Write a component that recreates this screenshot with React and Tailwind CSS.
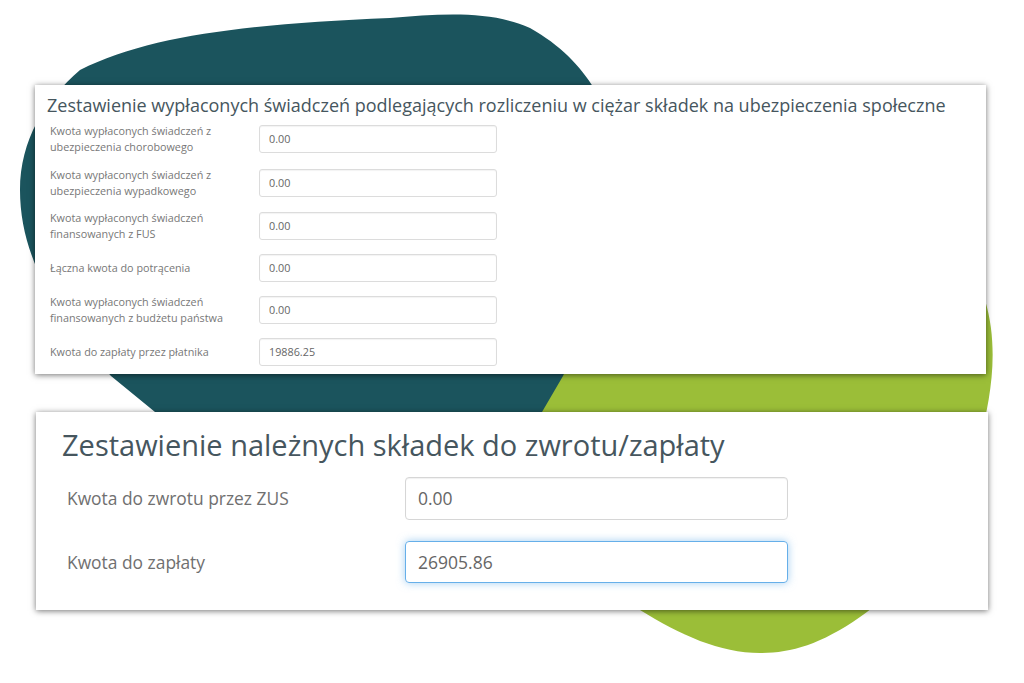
import React from 'react';

const font = { fontFamily: '"Open Sans", "Noto Sans", sans-serif' };

const benefitRows = [
  { label: ['Kwota wypłaconych świadczeń z', 'ubezpieczenia chorobowego'], value: '0.00', h: 'h-[44px]' },
  { label: ['Kwota wypłaconych świadczeń z', 'ubezpieczenia wypadkowego'], value: '0.00', h: 'h-[44px]' },
  { label: ['Kwota wypłaconych świadczeń', 'finansowanych z FUS'], value: '0.00', h: 'h-[42px]' },
  { label: ['Łączna kwota do potrącenia'], value: '0.00', h: 'h-[42px]' },
  { label: ['Kwota wypłaconych świadczeń', 'finansowanych z budżetu państwa'], value: '0.00', h: 'h-[42px]' },
  { label: ['Kwota do zapłaty przez płatnika'], value: '19886.25', h: 'h-[42px]' },
];

function Blobs() {
  return (
    <svg className="absolute inset-0" width="1024" height="683" viewBox="0 0 1024 683">
      <path
        d="M700 260 C800 230 960 240 985 300 C1000 350 990 400 980 440 C960 520 900 590 860 617 C820 645 790 653 760 653 C720 653 680 635 640 610 C600 580 560 500 530 420 C500 340 600 280 700 260 Z"
        fill="#9bbe38"
      />
      <path
        d="M80 70 C150 35 250 24 390 18 C440 14 490 10 530 28 C560 45 580 65 595 90 C640 170 600 300 563 376 L542 412 C520 470 480 520 350 540 C250 550 180 450 155 412 L111 376 C60 320 20 260 20 190 C20 140 45 100 80 70 Z"
        fill="#1b545d"
      />
    </svg>
  );
}

export default function App() {
  return (
    <div className="relative w-[1024px] h-[683px] overflow-hidden bg-white" style={font}>
      <Blobs />
      <div className="relative pt-[85px] pl-[35px]">
        <div className="w-[951px] h-[289px] bg-white shadow-[0_1px_6px_rgba(0,0,0,0.55)] pt-[9px]">
          <h2 className="pl-[12px] text-[18px] leading-[22px] text-[#46565e] whitespace-nowrap">
            Zestawienie wypłaconych świadczeń podlegających rozliczeniu w ciężar składek na ubezpieczenia społeczne
          </h2>
          <div className="mt-[1px] pl-[15px]">
            {benefitRows.map((row, i) => (
              <div key={i} className={`flex items-center ${row.h}`}>
                <div className="w-[209px] text-[10.8px] leading-[16px] text-[#777]">
                  {row.label.map((line, j) => (
                    <div key={j}>{line}</div>
                  ))}
                </div>
                <div className="w-[238px] h-[28px] flex items-center rounded-[3px] border border-[#dcdcdc] pl-[9px] text-[10.8px] text-[#666] shadow-[inset_0_1px_1px_rgba(0,0,0,0.05)]">
                  {row.value}
                </div>
              </div>
            ))}
          </div>
        </div>

        <div className="mt-[38px] ml-[1px] w-[952px] h-[198px] bg-white shadow-[0_1px_6px_rgba(0,0,0,0.55)] pt-[15px]">
          <h2 className="pl-[26px] text-[29px] leading-[35px] text-[#46565e] whitespace-nowrap">
            Zestawienie należnych składek do zwrotu/zapłaty
          </h2>
          <div className="mt-[15px] pl-[31px] flex flex-col gap-[21px]">
            <div className="flex items-center">
              <div className="w-[338px] text-[17.4px] text-[#707070]">Kwota do zwrotu przez ZUS</div>
              <div className="w-[383px] h-[43px] flex items-center rounded-[4px] border border-[#d6d6d6] pl-[12px] text-[17.5px] text-[#666] shadow-[inset_0_1px_1px_rgba(0,0,0,0.06)]">
                0.00
              </div>
            </div>
            <div className="flex items-center">
              <div className="w-[338px] text-[17.4px] text-[#707070]">Kwota do zapłaty</div>
              <div className="w-[383px] h-[42px] flex items-center rounded-[4px] border border-[#66afe9] pl-[12px] text-[17.5px] text-[#666] shadow-[0_0_8px_rgba(102,175,233,0.6)]">
                26905.86
              </div>
            </div>
          </div>
        </div>
      </div>
    </div>
  );
}
